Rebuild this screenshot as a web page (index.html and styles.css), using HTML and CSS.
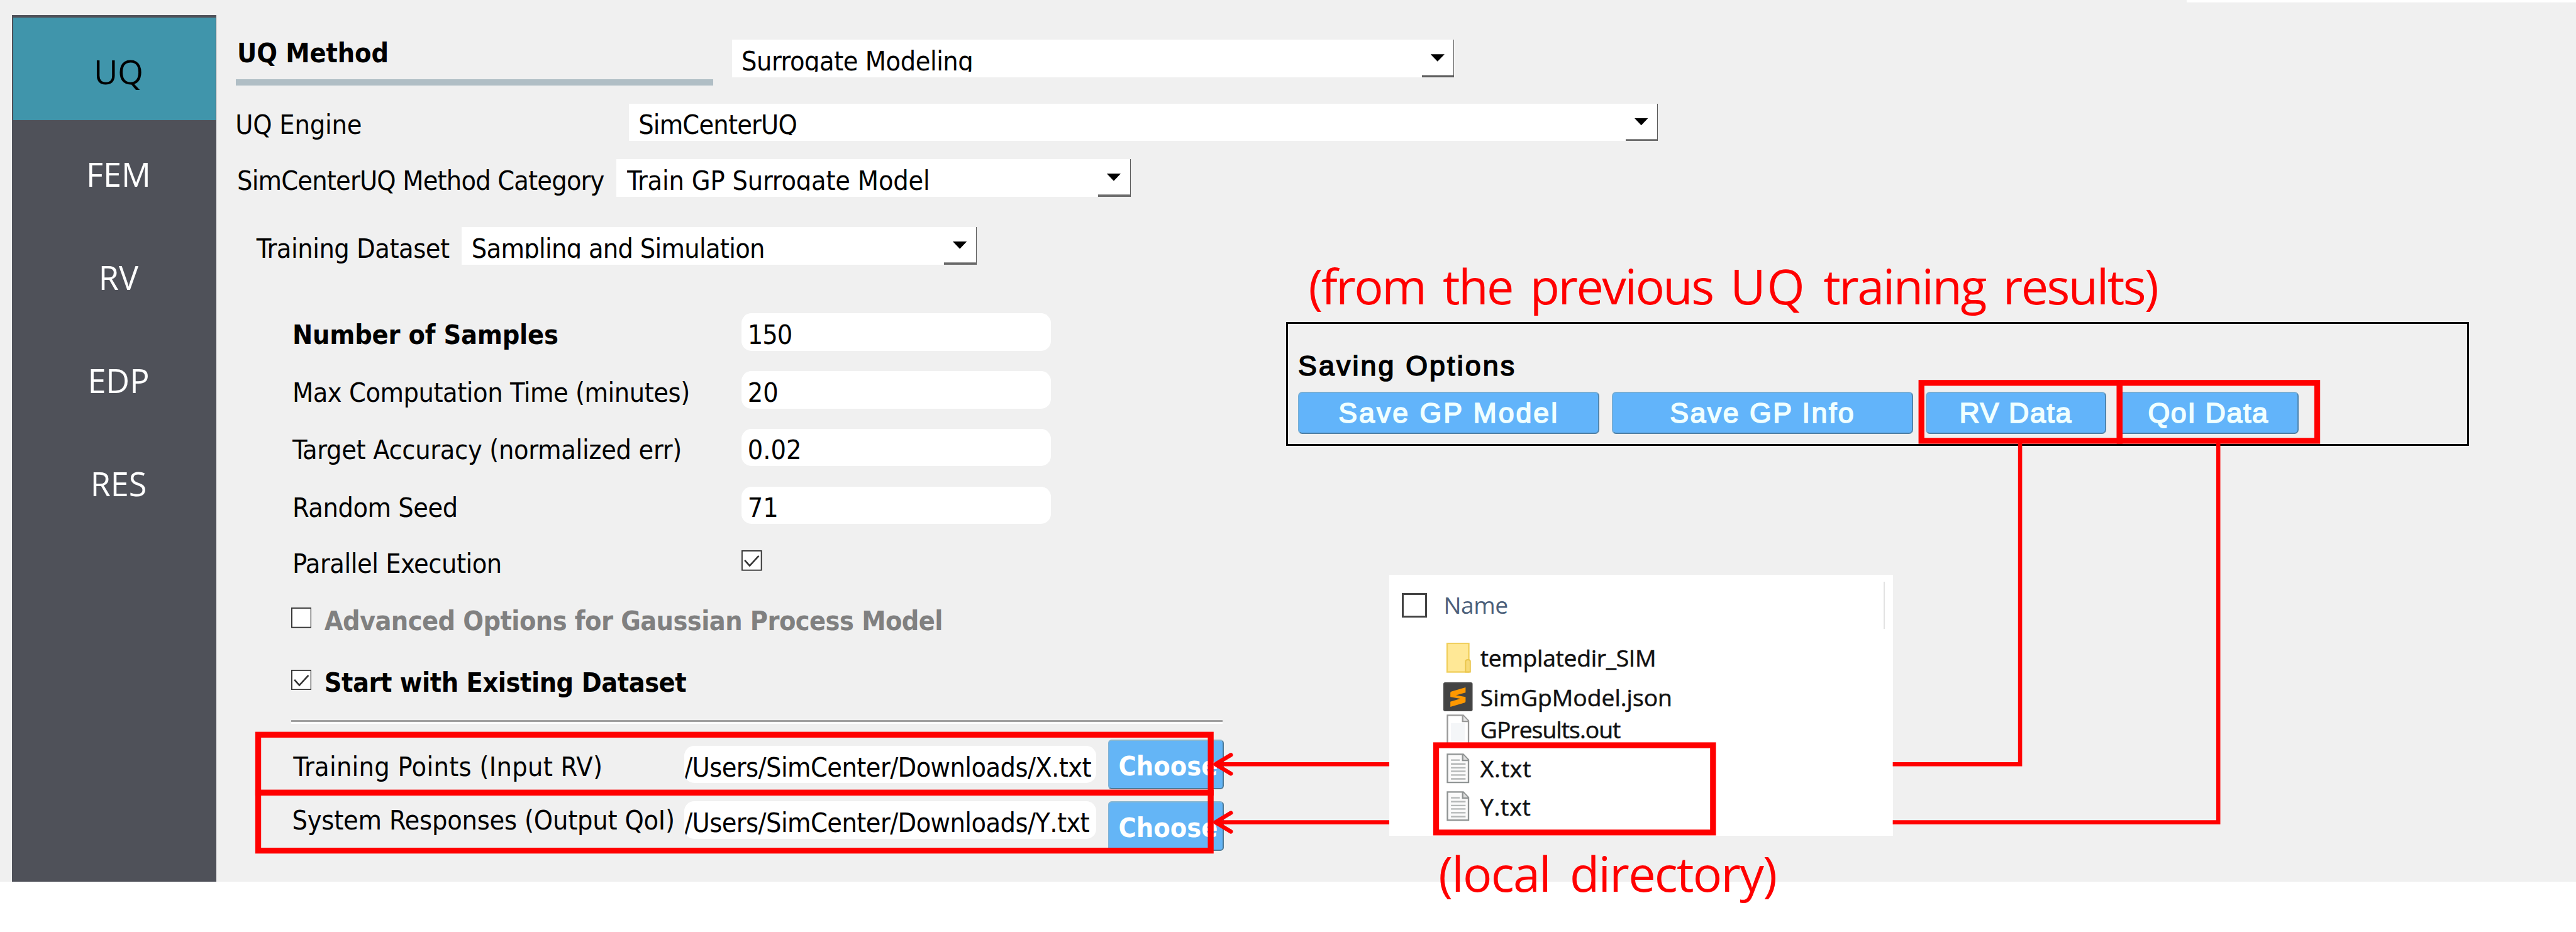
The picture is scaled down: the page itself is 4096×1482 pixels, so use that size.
FILE: index.html
```html
<!DOCTYPE html>
<html lang="en">
<head>
<meta charset="utf-8">
<title>UQ Method</title>
<link rel="stylesheet" href="styles.css">
</head>
<body>
<div class="page">
  <div class="app">
    <nav class="sidebar">
      <a class="tab tab-active">UQ</a>
      <a class="tab">FEM</a>
      <a class="tab">RV</a>
      <a class="tab">EDP</a>
      <a class="tab">RES</a>
    </nav>
    <main class="main">
      <div class="row row-method">
        <h1 class="heading">UQ Method</h1>
        <div class="select select-method"><span class="value t-a">Surrogate Modeling</span><i class="drop"></i></div>
      </div>
      <div class="row row-engine">
        <label class="label t-b">UQ Engine</label>
        <div class="select select-engine"><span class="value t-c">SimCenterUQ</span><i class="drop"></i></div>
      </div>
      <div class="row row-category">
        <label class="label t-c">SimCenterUQ Method Category</label>
        <div class="select select-category"><span class="value t-b">Train GP Surrogate Model</span><i class="drop"></i></div>
      </div>
      <div class="row row-dataset">
        <label class="label t-a">Training Dataset</label>
        <div class="select select-dataset"><span class="value t-d">Sampling and Simulation</span><i class="drop"></i></div>
      </div>

      <div class="body">
        <section class="form">
          <div class="field"><label class="label strong t-b">Number of Samples</label><div class="input t-e">150</div></div>
          <div class="field"><label class="label t-a">Max Computation Time (minutes)</label><div class="input">20</div></div>
          <div class="field"><label class="label t-f">Target Accuracy (normalized err)</label><div class="input">0.02</div></div>
          <div class="field"><label class="label t-a">Random Seed</label><div class="input">71</div></div>
          <div class="field field-check"><label class="label t-a">Parallel Execution</label>
            <svg class="check" viewBox="0 0 35 35"><rect x="1" y="1" width="33" height="33"/><path d="M5.500 17L14 26.500L29.500 9.500"/></svg>
          </div>
          <div class="option option-advanced">
            <svg class="check" viewBox="0 0 35 35"><rect x="1" y="1" width="33" height="33"/></svg>
            <span class="option-text t-g">Advanced Options for Gaussian Process Model</span>
          </div>
          <div class="option option-existing">
            <svg class="check" viewBox="0 0 35 35"><rect x="1" y="1" width="33" height="33"/><path d="M5.500 17L14 26.500L29.500 9.500"/></svg>
            <span class="option-text t-a">Start with Existing Dataset</span>
          </div>
          <hr class="rule">
          <div class="file file-x">
            <label class="label t-h">Training Points (Input RV)</label>
            <div class="input path t-g">/Users/SimCenter/Downloads/X.txt</div>
            <button class="choose">Choose</button>
          </div>
          <div class="file file-y">
            <label class="label t-b">System Responses (Output QoI)</label>
            <div class="input path t-g">/Users/SimCenter/Downloads/Y.txt</div>
            <button class="choose">Choose</button>
          </div>
        </section>

        <aside class="aside">
          <p class="note note-from">(from the previous <span class="caps">UQ</span> training results)</p>
          <section class="saving">
            <h2 class="saving-title">Saving Options</h2>
            <div class="buttons">
              <button class="save wide">Save GP Model</button>
              <button class="save wide s-info">Save GP Info</button>
              <button class="save s-rv">RV Data</button>
              <button class="save s-qoi">QoI Data</button>
            </div>
          </section>
          <section class="explorer">
            <div class="explorer-head"><span class="explorer-box"></span><span class="explorer-name">Name</span><i class="explorer-sep"></i></div>
            <div class="entry entry-folder">
              <svg class="icon" viewBox="0 0 52 52"><rect x="6.500" y="1" width="37" height="49" fill="#ffe896" stroke="#f0cf5c" stroke-width="2.500"/><path d="M38 50V32q0-3 4-3t4 3V50z" fill="#f7da78" stroke="#eac54b" stroke-width="2"/></svg>
              <span class="u-a">templatedir_SIM</span>
            </div>
            <div class="entry entry-json">
              <svg class="icon" viewBox="0 0 52 52"><rect x="0" y="0" width="50" height="49.500" rx="3" fill="#4a4a4a"/><rect x="2" y="2" width="46" height="45.500" fill="#434343"/><path d="M38 8.500L14 15.500Q12 16 12 18V25L29 28L12 33V42L36 35Q38 34.500 38 32.500V25L21.500 22L38 17.500Z" fill="#ff9800"/></svg>
              <span>SimGpModel.json</span>
            </div>
            <div class="entry entry-out">
              <svg class="icon" viewBox="0 0 52 52"><path d="M7 1.500H34L43 11V51H7Z" fill="#fff" stroke="#999" stroke-width="2.500"/><rect x="13" y="15" width="24" height="31" fill="#f4f6f8"/><path d="M33 1.500V12H43" fill="#e6e6e6" stroke="#999" stroke-width="2.500"/></svg>
              <span class="u-b">GPresults.out</span>
            </div>
            <div class="entry entry-x">
              <svg class="icon" viewBox="0 0 52 52"><path d="M7 1.500H34L43 11V49.500H7Z" fill="#fafafa" stroke="#8f9393" stroke-width="2.500"/><path d="M13 11.500H28M13 18H38M13 24.500H38M13 30.500H38M13 37H38M13 43.500H38" stroke="#b4b7b7" stroke-width="2.500"/><path d="M33 1.500V12H43" fill="#dedede" stroke="#8f9393" stroke-width="2.500"/></svg>
              <span class="u-c">X.txt</span>
            </div>
            <div class="entry entry-y">
              <svg class="icon" viewBox="0 0 52 52"><path d="M7 1.500H34L43 11V49.500H7Z" fill="#fafafa" stroke="#8f9393" stroke-width="2.500"/><path d="M13 11.500H28M13 18H38M13 24.500H38M13 30.500H38M13 37H38M13 43.500H38" stroke="#b4b7b7" stroke-width="2.500"/><path d="M33 1.500V12H43" fill="#dedede" stroke="#8f9393" stroke-width="2.500"/></svg>
              <span class="u-c">Y.txt</span>
            </div>
          </section>
          <p class="note note-local">(local directory)</p>
        </aside>
      </div>
    </main>
  </div>

  <!-- highlight frames and connectors -->
  <svg class="marks" viewBox="0 0 4400 1592">
    <rect class="edge" x="3735" y="0" width="665" height="4"/>
    <rect x="441" y="1255" width="1627" height="99"/>
    <rect x="441" y="1354" width="1627" height="99"/>
    <rect x="3282" y="654" width="338.500" height="99"/>
    <rect x="3620.500" y="654" width="337.500" height="99"/>
    <rect x="2453" y="1273" width="473" height="149"/>
    <path d="M3450.500 753V1305.500H3233M2373 1305.500H2076"/>
    <path d="M3789 753V1404.500H3233M2373 1404.500H2076"/>
    <path class="head" d="M2102.500 1289.500L2076 1305.500L2102.500 1321.500"/>
    <path class="head" d="M2102.500 1388.500L2076 1404.500L2102.500 1420.500"/>
  </svg>
</div>
</body>
</html>
```
FILE: styles.css
```css
html { font-size: 93.0909px; }
* { box-sizing: border-box; }
body { margin: 0; background: #fff; }
h1, h2, p { margin: 0; font-weight: normal; }
button { padding: 0; margin: 0; }

.page { position: relative; width: 44rem; height: 15.92rem; overflow: hidden; background: #fff; color: #000; }
.app { display: flex; height: 15.06rem; background: #f0f0f0; font: 0.46rem/0.64rem "DejaVu Sans Condensed", "DejaVu Sans", sans-serif; white-space: nowrap; }

/* sidebar */
.sidebar { flex: none; width: 3.5rem; margin: 0.26rem 0 0 0.2rem; padding: 0.04rem 0.02rem 0 0.03rem; background: #4f5159; display: flex; flex-direction: column; gap: 0.01rem; }
.tab { height: 1.75rem; padding: 0.05rem 0 0 0.14rem; font: 0.56rem/1.75rem "Open Sans", sans-serif; color: #fff; text-align: center; }
.tab-active { background: #4095ab; color: #000; }

/* header rows */
.main { flex: none; width: 40.3rem; display: flex; flex-direction: column; }
.row { display: flex; flex: none; height: 0.64rem; }
.row-method { margin-top: 0.68rem; padding-left: 0.33rem; }
.row-engine { margin-top: 0.45rem; padding-left: 0.32rem; }
.row-category { margin-top: 0.31rem; padding-left: 0.35rem; }
.row-dataset { margin-top: 0.52rem; padding-left: 0.68rem; }
.label { flex: none; padding-top: 0.05rem; }
.heading { width: 8.15rem; height: 0.87rem; margin: -0.09rem 0.32rem 0 0; padding-left: 0.02rem; border-bottom: 0.11rem solid #b0bec5; font-size: 0.46rem; font-weight: bold; letter-spacing: -0.001rem; }
.row-engine .label { width: 6.72rem; }
.row-category .label { width: 6.48rem; }
.row-dataset .label { width: 3.51rem; }
.select { position: relative; height: 0.64rem; background: #fff; border-right: 0.02rem solid #5a5a5a; padding-left: 0.165rem; }
.select-method { width: 12.34rem; }
.select-engine { width: 17.58rem; }
.select-category { width: 8.78rem; padding-left: 0.18rem; }
.select-dataset { width: 8.79rem; }
.value { display: block; height: 0.54rem; padding-top: 0.05rem; overflow: hidden; }
.drop { position: absolute; right: 0; bottom: 0; width: 0.54rem; height: 0.04rem; background: linear-gradient(#a5a5a5, #5c5c5c 60%, #707070); }
.drop::before { content: ""; position: absolute; right: 0.155rem; bottom: 0.27rem; width: 0.24rem; height: 0.125rem; background: #000; clip-path: polygon(0 0, 100% 0, 50% 100%); }

/* body columns */
.body { display: flex; flex: none; }
.form { width: 18.27rem; padding: 0.835rem 0 0 1.27rem; flex: none; }
.field { display: flex; height: 0.985rem; }
.field .label { width: 7.7rem; padding-left: 0.025rem; }
.strong { font-weight: bold; }
.input { width: 5.28rem; height: 0.64rem; padding: 0.05rem 0 0 0.1rem; background: #fff; border-radius: 0.17rem; overflow: hidden; }
.field-check { height: 1.12rem; margin-top: -0.03rem; }
.check { flex: none; width: 0.35rem; height: 0.35rem; }
.check rect { fill: #fff; stroke: #333; stroke-width: 2; }
.check path { fill: none; stroke: #333; stroke-width: 2.8; }
.field-check .check { margin-top: 0.135rem; }
.option { display: flex; gap: 0.22rem; font-weight: bold; height: 1.05rem; }
.option .check { margin-top: 0.095rem; }
.option-advanced { color: #808080; margin-top: -0.09rem; }
.option-advanced .check { margin-top: 0.085rem; }
.option-existing { height: 0.48rem; }
.rule { width: 15.91rem; height: 0.06rem; margin: 0.475rem 0 0.27rem; border: 0; background: linear-gradient(#a0a0a0 55%, #fff 55%); }
.file { display: flex; height: 1.06rem; }
.file .label { width: 6.72rem; padding: 0.15rem 0 0 0.04rem; }
.path { width: 7.03rem; margin: 0.11rem 0.21rem 0 0; padding-left: 0; font-kerning: none; }
.file-y .label { padding-top: 0.005rem; padding-left: 0.02rem; }
.file-y .path { margin-top: 0; }
.choose { width: 1.97rem; height: 0.85rem; padding: 0.12rem 0 0 0.155rem; display: flex; border: 0.03rem solid; border-color: #8ab7cf #4f7a96 #4f7a96 #7fb2d6; border-radius: 0.06rem; background: #64b5f6; color: #fff; font: bold 0.46rem/0.64rem "DejaVu Sans Condensed", "DejaVu Sans", sans-serif; }

/* right column */
.aside { flex: none; width: 22.03rem; }
.note { font: 0.83rem/1rem "Open Sans", sans-serif; color: #f00; letter-spacing: -0.027rem; word-spacing: 0.11rem; }
.note-from { margin: -0.135rem 0 0 0.38rem; }
.caps { letter-spacing: 0.02rem; }
.saving { width: 20.2rem; height: 2.12rem; margin-top: 0.115rem; padding: 0.414rem 0 0 0.17rem; border: 0.04rem solid #000; font: 0.48rem/0.6rem "Liberation Sans", Arial, sans-serif; }
.saving-title { font: inherit; letter-spacing: 0.034rem; -webkit-text-stroke: 0.018rem #000; }
.buttons { display: flex; gap: 0.21rem; margin-top: 0.146rem; }
.save { width: 3.08rem; height: 0.72rem; border: 0.03rem solid; border-color: #74aed8 #4f86b0 #4f7fa3 #74aed8; border-radius: 0.07rem; background: #62b4fa; color: #f0ffff; font: 0.48rem/0.66rem "Liberation Sans", Arial, sans-serif; letter-spacing: 0.032rem; -webkit-text-stroke: 0.018rem #f0ffff; }
.wide { width: 5.15rem; }
.s-info { letter-spacing: 0.027rem; }
.s-rv, .s-qoi { letter-spacing: 0.018rem; }

/* file list */
.explorer { width: 8.6rem; height: 4.46rem; margin: 2.2rem 0 0 1.76rem; padding-top: 0.232rem; background: #fff; font: 0.4rem/0.56rem "Open Sans", sans-serif; color: #111; }
.explorer-head { display: flex; height: 0.909rem; padding-left: 0.22rem; }
.explorer-box { flex: none; width: 0.42rem; height: 0.42rem; margin-top: 0.08rem; border: 0.04rem solid #444; }
.explorer-name { flex: none; width: 7.8rem; padding-left: 0.29rem; color: #4c607a; letter-spacing: -0.005rem; }
.explorer-sep { flex: none; width: 0.025rem; height: 0.8rem; margin-top: -0.11rem; background: #e2e2e2; }
.entry { display: flex; gap: 0.115rem; padding-left: 0.92rem; -webkit-text-stroke: 0.006rem #111; }
.entry-folder { height: 0.671rem; }
.entry-json { height: 0.549rem; }
.entry-out { height: 0.664rem; }
.entry-x { height: 0.654rem; }
.icon { flex: none; width: 0.52rem; height: 0.52rem; margin-top: 0.02rem; }
.note-local { margin: 0.134rem 0 0 2.6rem; letter-spacing: -0.019rem; word-spacing: 0.14rem; }

/* per-string tracking */
.t-a { letter-spacing: -0.005rem; }
.t-b { letter-spacing: -0.0022rem; }
.t-c { letter-spacing: -0.0088rem; }
.t-d { letter-spacing: -0.0077rem; }
.t-e { letter-spacing: -0.01rem; }
.t-f { letter-spacing: -0.0035rem; }
.t-g { letter-spacing: -0.0062rem; }
.t-h { letter-spacing: 0.0032rem; }
.u-a { letter-spacing: -0.003rem; }
.u-b { letter-spacing: -0.01rem; }
.u-c { letter-spacing: 0.009rem; }

.marks { position: absolute; left: 0; top: 0; width: 44rem; height: 15.92rem; }
.marks rect { fill: none; stroke: #f00; stroke-width: 10; }
.marks path { fill: none; stroke: #f00; stroke-width: 7; }
.marks .head { stroke-linecap: round; stroke-linejoin: round; }
.marks .edge { fill: #fff; stroke: none; }
```
